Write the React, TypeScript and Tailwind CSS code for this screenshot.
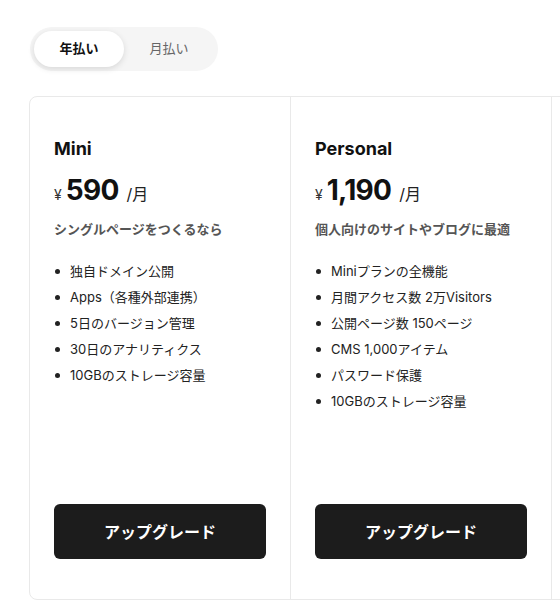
import React, { useState } from 'react';

const plans = [
  {
    name: 'Mini',
    price: '590',
    desc: 'シングルページをつくるなら',
    features: ['独自ドメイン公開', 'Apps（各種外部連携）', '5日のバージョン管理', '30日のアナリティクス', '10GBのストレージ容量'],
  },
  {
    name: 'Personal',
    price: '1,190',
    desc: '個人向けのサイトやブログに最適',
    features: ['Miniプランの全機能', '月間アクセス数 2万Visitors', '公開ページ数 150ページ', 'CMS 1,000アイテム', 'パスワード保護', '10GBのストレージ容量'],
  },
];

const App: React.FC = () => {
  const [yearly, setYearly] = useState(true);

  return (
    <div
      className="min-h-screen w-[560px] overflow-hidden bg-white pl-[29px] pt-[27px] text-[#1c1c1c]"
      style={{ fontFamily: 'Inter, "Noto Sans CJK JP", sans-serif' }}
    >
      {/* billing toggle */}
      <div className="ml-px inline-flex rounded-full bg-[#f5f5f5] p-1">
        <button
          onClick={() => setYearly(true)}
          className={`h-9 w-[90px] rounded-full text-[13px] ${yearly ? 'bg-white font-bold text-[#111] shadow-[0_2px_6px_rgba(0,0,0,0.12)]' : 'text-[#666]'}`}
        >
          年払い
        </button>
        <button
          onClick={() => setYearly(false)}
          className={`h-9 w-[90px] rounded-full text-[13px] ${!yearly ? 'bg-white font-bold text-[#111] shadow-[0_2px_6px_rgba(0,0,0,0.12)]' : 'text-[#666]'}`}
        >
          月払い
        </button>
      </div>

      {/* plans */}
      <div className="mt-[25px] flex h-[504px] w-max rounded-lg border border-[#e9e9e9]">
        {plans.map((p) => (
          <div key={p.name} className="flex w-[261px] flex-col border-r border-[#e9e9e9] px-6 pb-10 pt-10">
            <h2 className="text-[18px] font-bold leading-6 text-[#111]">{p.name}</h2>
            <div className="mt-[11px] flex items-baseline leading-9">
              <span className="text-[14px] text-[#333]">¥</span>
              <span className="ml-1 text-[28px] font-bold tracking-tight text-[#111]">{p.price}</span>
              <span className="ml-2 text-[16px] text-[#222]">/月</span>
            </div>
            <p className="mt-[6px] text-[13px] font-semibold leading-5 text-[#555]">{p.desc}</p>
            <ul className="mt-[19px]">
              {p.features.map((f) => (
                <li key={f} className="flex items-center text-[13px] leading-[26px] text-[#222]">
                  <span className="ml-[1px] mr-[10px] h-[5px] w-[5px] rounded-full bg-[#222]" />
                  {f}
                </li>
              ))}
            </ul>
            <button className="mt-auto h-[55px] w-full rounded-md bg-[#1c1c1c] text-[16px] font-bold text-white">
              アップグレード
            </button>
          </div>
        ))}
        {/* next plan column, outside the visible area */}
        <div className="w-[261px]" />
      </div>
    </div>
  );
};

export default App;
